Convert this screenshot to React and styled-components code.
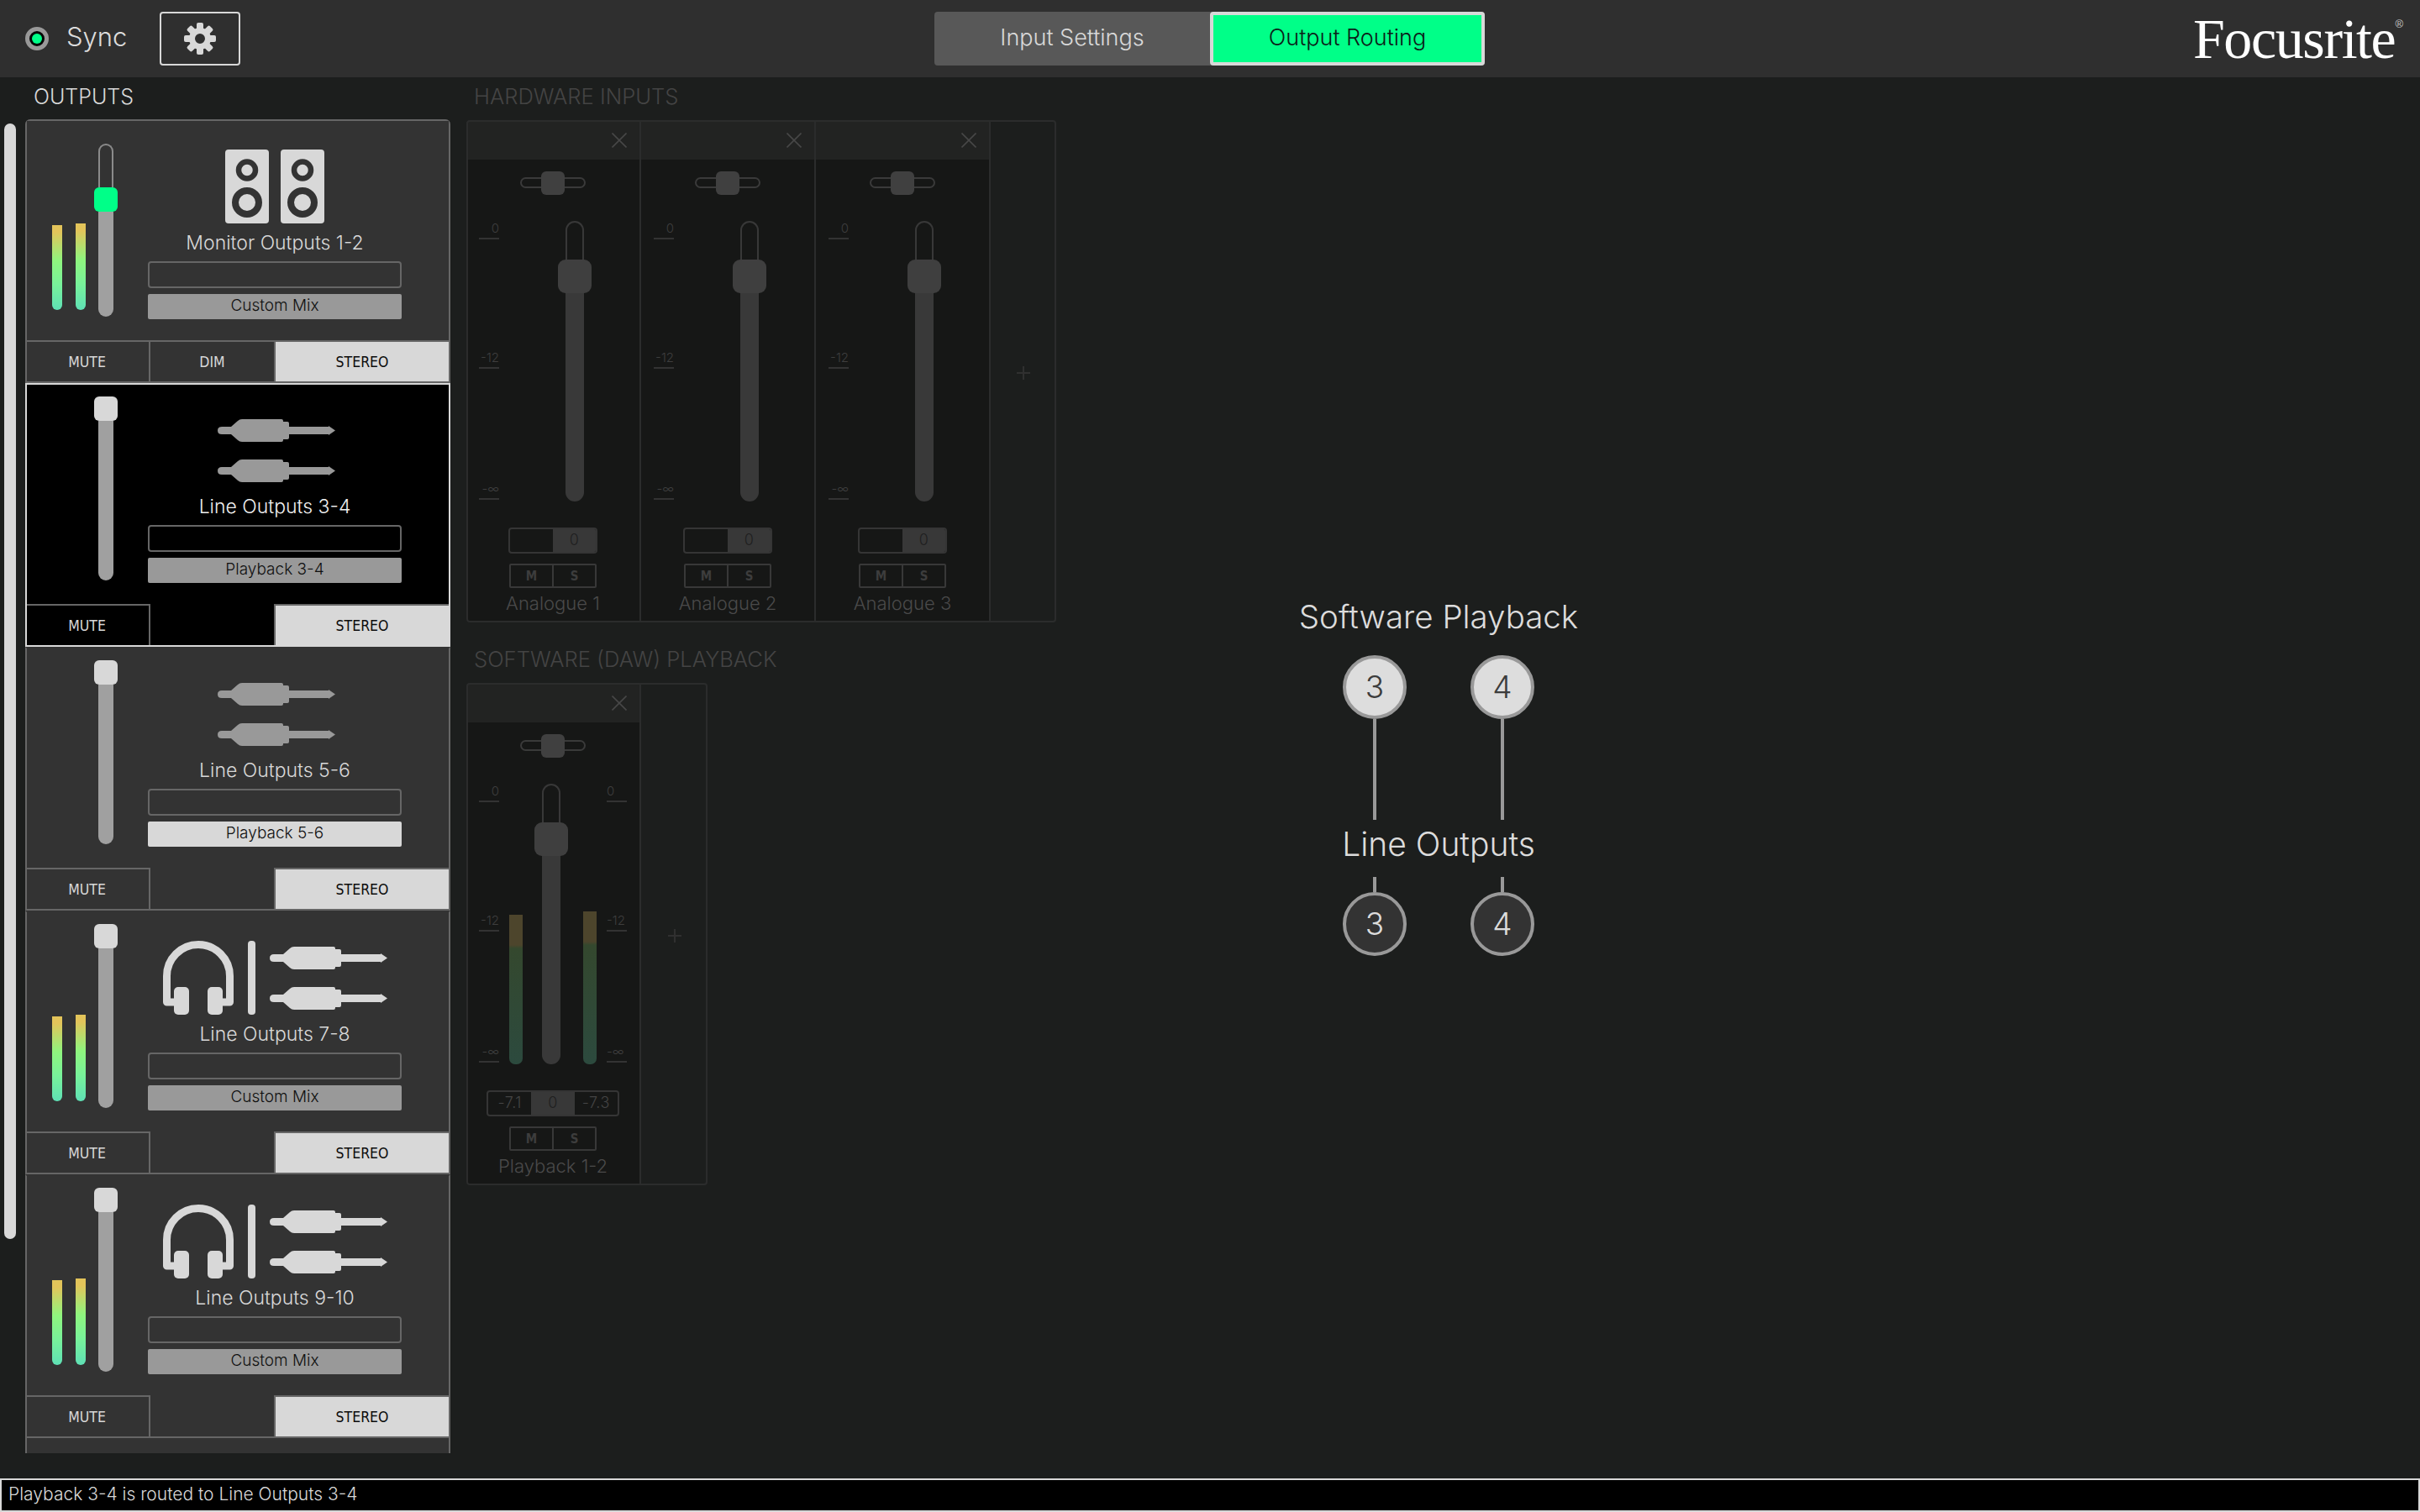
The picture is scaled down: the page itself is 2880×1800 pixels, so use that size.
import React from "react";
import styled, { createGlobalStyle } from "styled-components";

const Global = createGlobalStyle`
  html, body { margin: 0; padding: 0; background: #1c1e1d; }
  * { box-sizing: border-box; }
`;

const Page = styled.div`
  width: 100%; height: 1800px; display: flex; flex-direction: column; overflow: hidden;
  background: #1c1e1d; color: #d8d8d8;
  font-family: Inter, "Liberation Sans", sans-serif; font-weight: 300;
`;
const Header = styled.header`
  height: 92px; flex: none; display: flex; align-items: center; background: #2f2f2f;
`;
const SyncGroup = styled.div`
  width: 1112px; flex: none; display: flex; align-items: center; padding-left: 30px;
`;
const Led = styled.div`
  width: 28px; height: 28px; border-radius: 50%; border: 5px solid #999; background: #050505;
  display: flex; align-items: center; justify-content: center;
  &::after { content: ""; width: 12px; height: 12px; border-radius: 50%; background: #00ff88; }
`;
const SyncLabel = styled.span`
  margin-left: 21px; font-size: 31px; line-height: 36px; width: 90px; padding-bottom: 4px; color: #dcdcdc;
`;
const GearButton = styled.button`
  margin-left: 21px; width: 96px; height: 64px; padding: 0; background: transparent;
  border: 2px solid #d8d8d8; border-radius: 4px;
  display: flex; align-items: center; justify-content: center;
`;
const Tabs = styled.div`
  display: flex; height: 64px; background: #585858; border-radius: 4px; flex: none;
`;
const Tab = styled.div`
  width: ${(p) => (p.$active ? 327 : 328)}px; height: 64px; display: flex; align-items: center; justify-content: center;
  font-size: 27px; padding-bottom: 3px; border-radius: 4px;
  color: ${(p) => (p.$active ? "#0c2018" : "#d8d8d8")};
  background: ${(p) => (p.$active ? "#00ff88" : "transparent")};
  border: ${(p) => (p.$active ? "4px solid #d8d8d8" : "0")};
`;
const Logo = styled.div`
  margin-left: auto; padding-right: 20px; display: flex; align-items: flex-start; color: #fff;
  font-family: "Liberation Serif", serif; font-weight: 400; font-size: 68px; line-height: 68px; letter-spacing: -1.4px;
  sup { font-family: "Liberation Sans", sans-serif; font-size: 13px; line-height: 13px; letter-spacing: 0; margin: 10px 0 0 0; color: #ccc; }
`;

const Main = styled.main`
  flex: 1; min-height: 0; display: flex; align-items: flex-start;
`;
const ScrollBar = styled.div`
  width: 14px; height: 1328px; margin: 55px 0 0 5px; border-radius: 7px; background: #d8d8d8; flex: none;
`;
const SectionLabel = styled.div`
  height: 30px; line-height: 30px; font-size: ${(p) => p.$size}px; margin-left: ${(p) => p.$indent}px;
  margin-top: ${(p) => p.$top || 0}px;
  color: ${(p) => p.$color || "#d8d8d8"}; white-space: nowrap;
`;
const OutputsColumn = styled.section`
  width: 506px; margin-left: 11px; padding-top: 8px; flex: none;
`;
const OutputsPanel = styled.div`
  height: 1588px; margin-top: 12px; background: #333; border-radius: 6px 6px 0 0;
  overflow: hidden; display: flex; flex-direction: column;
`;
const Strip = styled.article`
  height: 314px; flex: none; display: flex; flex-direction: column;
  background: ${(p) => (p.$selected ? "#000" : "#333")};
  border-left: 2px solid ${(p) => (p.$selected ? "#d8d8d8" : "#666")};
  border-right: 2px solid ${(p) => (p.$selected ? "#d8d8d8" : "#666")};
  border-bottom: 2px solid ${(p) => (p.$selected ? "#d8d8d8" : "#666")};
  border-top: 2px solid ${(p) => (p.$selected ? "#d8d8d8" : "#333")};
  &:first-child { border-top-color: #666; }
`;
const PanelTail = styled.div`
  flex: 1; border-left: 2px solid #666; border-right: 2px solid #666;
`;
const StripBody = styled.div`
  height: 261px; flex: none; display: flex;
`;
const Levels = styled.div`
  width: 40px; height: 225px; margin-left: 30px; display: flex; gap: 16px; align-items: flex-end; flex: none;
`;
const LevelBar = styled.div`
  width: 12px; height: ${(p) => p.$h}px; border-radius: 0 0 6px 6px;
  background: linear-gradient(#e3c45a 0%, #e3c45a 8%, #8ff57e 42%, #78f29a 70%, #5fe0b5 100%);
`;
const Fader = styled.div`
  width: 28px; height: ${(p) => 233 - p.$top}px; margin: ${(p) => p.$top}px 0 0 10px; flex: none;
  display: flex; flex-direction: column; align-items: center;
`;
const FaderHead = styled.div`
  width: 18px; height: ${(p) => p.$h}px; flex: none; border: 2px solid #8a8a8a; border-bottom: 0; border-radius: 9px 9px 0 0;
`;
const FaderKnob = styled.div`
  width: 28px; height: 29px; flex: none; border-radius: 6px; background: ${(p) => (p.$accent ? "#00ff88" : "#d8d8d8")};
`;
const FaderFill = styled.div`
  width: 18px; flex: 1; background: #a0a0a0; border-radius: 0 0 9px 9px;
`;
const StripInfo = styled.div`
  width: 302px; margin-left: 36px; flex: none; display: flex; flex-direction: column;
`;
const IconSlot = styled.div`
  height: 88px; margin-top: 34px; flex: none; display: flex; align-items: center; justify-content: center; gap: 17px;
  padding-left: ${(p) => p.$shift || 0}px;
`;
const OutputName = styled.div`
  height: 45px; flex: none; display: flex; align-items: center; justify-content: center; padding-top: 1px;
  font-size: 23px; color: ${(p) => (p.$selected ? "#eee" : "#d8d8d8")}; white-space: nowrap;
`;
const NameField = styled.div`
  height: 32px; flex: none; border: 2px solid #666; border-radius: 4px;
`;
const SourceBar = styled.div`
  height: 30px; margin-top: 7px; flex: none; border-radius: 2px; display: flex; align-items: center; justify-content: center;
  padding-bottom: 4px; font-size: 19px; color: #101010; font-weight: 300;
  background: ${(p) => (p.$light ? "#d8d8d8" : "#999")};
`;
const ButtonRow = styled.div`
  flex: 1; display: flex; min-height: 0;
`;
const StripButton = styled.div`
  width: ${(p) => (p.$w ? `${p.$w}px` : "auto")}; flex: ${(p) => (p.$w ? "none" : "1")};
  display: flex; align-items: center; justify-content: center;
  font-family: "DejaVu Sans Condensed", "DejaVu Sans", sans-serif; font-weight: 400; font-size: 17.5px;
  font-stretch: condensed;
  padding-right: ${(p) => (p.$divider ? 2 : 0)}px;
  border-top: ${(p) => (p.$blank ? "0" : "2px solid #666")};
  border-right: ${(p) => (p.$divider ? "2px solid #666" : "0")};
  border-left: ${(p) => (p.$on ? "2px solid #666" : "0")};
  background: ${(p) => (p.$on ? "#d8d8d8" : "transparent")};
  color: ${(p) => (p.$on ? "#0c0c0c" : "#d8d8d8")};
`;

const RoutingColumn = styled.section`
  width: 702px; margin-left: 19px; padding-top: 8px; flex: none; display: flex; flex-direction: column;
`;
const ChannelPanel = styled.div`
  display: flex; height: 598px; margin-top: 13px; width: ${(p) => p.$w}px; border-radius: 4px;
  outline: 2px solid #2b2c2c; outline-offset: -2px; overflow: hidden;
`;
const Channel = styled.div`
  width: 208px; flex: none; display: flex; flex-direction: column; background: #161716; border-right: 2px solid #2b2c2c;
`;
const ChannelHeader = styled.div`
  height: 47px; flex: none; background: #222322; display: flex; align-items: center; justify-content: flex-end; padding-right: 15px;
`;
const PanTrack = styled.div`
  width: 78px; height: 13px; margin: 21px auto 0; position: relative; flex: none;
  border: 2px solid #3a3a3a; border-radius: 7px;
`;
const PanKnob = styled.div`
  position: absolute; top: -9.5px; left: 23px; width: 28px; height: 28px; border-radius: 6px; background: #404040;
`;
const ChannelMeters = styled.div`
  height: 334px; margin-top: 39px; padding-left: 15px; display: flex; flex: none; align-items: stretch;
`;
const Scale = styled.div`
  width: 24px; flex: none; margin-left: ${(p) => p.$gap || 0}px;
`;
const Tick = styled.div`
  height: 22px; border-bottom: 2px solid #333; font-size: 15px; line-height: 18px; color: #3e3e3e;
  text-align: ${(p) => (p.$right ? "left" : "right")};
  &:nth-child(2) { margin-top: 132px; }
  &:nth-child(3) { margin-top: 134px; }
`;
const ChannelFader = styled.div`
  width: 40px; flex: none; margin-left: ${(p) => p.$gap}px; display: flex; flex-direction: column; align-items: center;
`;
const ChannelFaderHead = styled.div`
  width: 22px; height: 46px; flex: none; border: 2px solid #383838; border-bottom: 0; border-radius: 11px 11px 0 0;
`;
const ChannelFaderKnob = styled.div`
  width: 40px; height: 40px; flex: none; background: #3f3f3f; border-radius: 9px;
`;
const ChannelFaderFill = styled.div`
  width: 22px; flex: 1; background: #393939; border-radius: 0 0 11px 11px;
`;
const DimMeter = styled.div`
  width: 16px; height: ${(p) => p.$h}px; align-self: flex-end; flex: none; margin-left: ${(p) => p.$gap}px; border-radius: 0 0 7px 7px;
  background: linear-gradient(#4d452c 0, #4d452c 36px, #34482e 40px, #2c4a3e 100%);
`;
const ValueBox = styled.div`
  width: ${(p) => p.$w}px; height: 31px; margin: 31px auto 0; flex: none; display: flex;
  border: 2px solid #353535; border-radius: 4px; font-size: 18px; overflow: hidden;
`;
const ValueCell = styled.div`
  flex: 1; display: flex; align-items: center; justify-content: center; padding-bottom: 3px; letter-spacing: 0.5px;
  background: ${(p) => (p.$fill ? "#383838" : "transparent")};
  color: ${(p) => (p.$fill ? "#1f1f1f" : "#444")};
`;
const MuteSolo = styled.div`
  width: 104px; height: 29px; margin: 12px auto 0; flex: none; display: flex; border: 2px solid #383838; border-radius: 2px;
`;
const MuteSoloCell = styled.div`
  flex: 1; display: flex; align-items: center; justify-content: center;
  font-family: "DejaVu Sans Condensed", "DejaVu Sans", sans-serif; font-weight: 700; font-size: 15px; font-stretch: condensed; color: #3d3d3d;
  & + & { border-left: 2px solid #383838; }
`;
const ChannelName = styled.div`
  height: 28px; margin-top: 4px; flex: none; text-align: center; line-height: 28px; font-size: 22px; color: #4a4a4a; white-space: nowrap;
`;
const AddColumn = styled.div`
  flex: 1; display: flex; align-items: center; justify-content: center; padding-top: 4px;
`;

const Diagram = styled.section`
  width: 400px; margin: -4px 0 0 255px; align-self: center; flex: none; display: flex; flex-direction: column; align-items: center;
`;
const DiagramTitle = styled.div`
  font-size: ${(p) => p.$size}px; line-height: 48px; color: #dcdcdc; white-space: nowrap; height: 48px;
  margin-top: ${(p) => p.$top || 0}px;
`;
const PortRow = styled.div`
  display: flex; gap: 76px; margin-top: ${(p) => p.$top}px;
`;
const Port = styled.div`
  width: 76px; display: flex; flex-direction: column; align-items: center;
`;
const PortCircle = styled.div`
  width: 76px; height: 76px; border-radius: 50%; border: 4px solid #999; flex: none;
  display: flex; align-items: center; justify-content: center; padding-bottom: 2px; font-size: 37px;
  background: ${(p) => (p.$source ? "#dddddd" : "#333")};
  color: ${(p) => (p.$source ? "#3c3c3c" : "#dcdcdc")};
`;
const Wire = styled.div`
  width: 4px; height: ${(p) => p.$h}px; background: #999; flex: none;
`;

const StatusBar = styled.footer`
  height: 40px; flex: none; background: #000; border: 2px solid #d8d8d8; padding: 0 0 3px 8px;
  display: flex; align-items: center; font-size: 21px; color: #d8d8d8; white-space: nowrap;
`;

const Gear = () => (
  <svg width="40" height="40" viewBox="-20 -20 40 40" aria-hidden="true">
    <circle r="9.5" fill="none" stroke="#d8d8d8" strokeWidth="7" />
    {[0, 45, 90, 135, 180, 225, 270, 315].map((a) => (
      <rect key={a} x="-4" y="-19" width="8" height="9" rx="2" fill="#d8d8d8" transform={`rotate(${a})`} />
    ))}
  </svg>
);

const Speakers = () => (
  <svg width="118" height="88" viewBox="0 0 118 88" aria-hidden="true">
    {[0, 66].map((x) => (
      <g key={x} transform={`translate(${x} 0)`}>
        <rect width="52" height="88" rx="4" fill="#d8d8d8" />
        <circle cx="26" cy="24.5" r="10" fill="#d8d8d8" stroke="#333" strokeWidth="6.5" />
        <circle cx="26" cy="63" r="14" fill="#d8d8d8" stroke="#333" strokeWidth="8" />
      </g>
    ))}
  </svg>
);

const jackPath =
  "M5 9H16L24 2Q26 0 29 0H76Q78 0 78 2V3H83Q85 3 85 5V9H132V8L140 13.5L132 19V18H85V22Q85 24 83 24H78V25Q78 27 76 27H29Q26 27 24 25L16 18H5Q0 18 0 13.5Q0 9 5 9Z";

const Jacks = ({ color }) => (
  <svg width="140" height="75" viewBox="0 0 140 75" aria-hidden="true">
    <path d={jackPath} fill={color} />
    <path d={jackPath} fill={color} transform="translate(0 48)" />
  </svg>
);

const Headphones = () => (
  <svg width="84" height="88" viewBox="0 0 84 88" aria-hidden="true">
    <path d="M15 73H4.5V42A37.5 37.5 0 0 1 79.5 42V73H68" fill="none" stroke="#d8d8d8" strokeWidth="9" strokeLinejoin="round" />
    <rect x="13" y="55" width="18" height="33" rx="5" fill="#d8d8d8" />
    <rect x="53" y="55" width="18" height="33" rx="5" fill="#d8d8d8" />
  </svg>
);

const Divider = styled.div`
  width: 9px; height: 88px; background: #d8d8d8; border-radius: 4px; flex: none;
`;

const Close = () => (
  <svg width="18" height="18" viewBox="0 0 18 18" aria-hidden="true">
    <path d="M0.5 0.5 17.5 17.5M17.5 0.5 0.5 17.5" stroke="#474747" strokeWidth="1.6" />
  </svg>
);
const Plus = () => (
  <svg width="16" height="16" viewBox="0 0 16 16" aria-hidden="true">
    <path d="M8 0V16M0 8H16" stroke="#303030" strokeWidth="2" />
  </svg>
);

const strips = [
  { name: "Monitor Outputs 1-2", source: "Custom Mix", icon: "speakers", levels: [101, 103], top: 27, head: 52, accent: true, dim: true },
  { name: "Line Outputs 3-4", source: "Playback 3-4", icon: "jacks", selected: true },
  { name: "Line Outputs 5-6", source: "Playback 5-6", icon: "jacks", light: true },
  { name: "Line Outputs 7-8", source: "Custom Mix", icon: "phones", levels: [101, 103] },
  { name: "Line Outputs 9-10", source: "Custom Mix", icon: "phones", levels: [101, 103] },
];

const StripIcon = ({ icon }) => {
  if (icon === "speakers") return <Speakers />;
  if (icon === "jacks") return <Jacks color="#999" />;
  return (
    <>
      <Headphones />
      <Divider />
      <Jacks color="#d8d8d8" />
    </>
  );
};

const OutputStrip = ({ s }) => (
  <Strip $selected={s.selected}>
    <StripBody>
      <Levels>
        {(s.levels || []).map((h, i) => (
          <LevelBar key={i} $h={h} />
        ))}
      </Levels>
      <Fader $top={s.top || 14}>
        {s.head ? <FaderHead $h={s.head} /> : null}
        <FaderKnob $accent={s.accent} />
        <FaderFill />
      </Fader>
      <StripInfo>
        <IconSlot $shift={s.icon === "jacks" ? 4 : 0}>
          <StripIcon icon={s.icon} />
        </IconSlot>
        <OutputName $selected={s.selected}>{s.name}</OutputName>
        <NameField />
        <SourceBar $light={s.light}>{s.source}</SourceBar>
      </StripInfo>
    </StripBody>
    <ButtonRow>
      <StripButton $w={147} $divider>MUTE</StripButton>
      <StripButton $w={147} $blank={!s.dim}>{s.dim ? "DIM" : ""}</StripButton>
      <StripButton $on>STEREO</StripButton>
    </ButtonRow>
  </Strip>
);

const ticks = ["0", "-12", "-∞"];

const ChannelStrip = ({ name, meters, values }) => (
  <Channel>
    <ChannelHeader>
      <Close />
    </ChannelHeader>
    <PanTrack>
      <PanKnob />
    </PanTrack>
    <ChannelMeters>
      <Scale>
        {ticks.map((t) => (
          <Tick key={t}>{t}</Tick>
        ))}
      </Scale>
      {meters ? <DimMeter $gap={12} $h={178} /> : null}
      <ChannelFader $gap={meters ? 14 : 70}>
        <ChannelFaderHead />
        <ChannelFaderKnob />
        <ChannelFaderFill />
      </ChannelFader>
      {meters ? <DimMeter $gap={18} $h={182} /> : null}
      {meters ? (
        <Scale $gap={12}>
          {ticks.map((t) => (
            <Tick key={t} $right>{t}</Tick>
          ))}
        </Scale>
      ) : null}
    </ChannelMeters>
    <ValueBox $w={meters ? 158 : 106}>
      {values.map((v, i) => (
        <ValueCell key={i} $fill={v === "0"}>{v}</ValueCell>
      ))}
    </ValueBox>
    <MuteSolo>
      <MuteSoloCell>M</MuteSoloCell>
      <MuteSoloCell>S</MuteSoloCell>
    </MuteSolo>
    <ChannelName>{name}</ChannelName>
  </Channel>
);

export default function App() {
  return (
    <Page>
      <Global />
      <Header>
        <SyncGroup>
          <Led />
          <SyncLabel>Sync</SyncLabel>
          <GearButton>
            <Gear />
          </GearButton>
        </SyncGroup>
        <Tabs>
          <Tab>Input Settings</Tab>
          <Tab $active>Output Routing</Tab>
        </Tabs>
        <Logo>
          Focusrite<sup>®</sup>
        </Logo>
      </Header>
      <Main>
        <ScrollBar />
        <OutputsColumn>
          <SectionLabel $indent={10} $size={25}>OUTPUTS</SectionLabel>
          <OutputsPanel>
            {strips.map((s) => (
              <OutputStrip key={s.name} s={s} />
            ))}
            <PanelTail />
          </OutputsPanel>
        </OutputsColumn>
        <RoutingColumn>
          <SectionLabel $indent={9} $size={25.6} $color="#444">HARDWARE INPUTS</SectionLabel>
          <ChannelPanel $w={702}>
            <ChannelStrip name="Analogue 1" values={["", "0"]} />
            <ChannelStrip name="Analogue 2" values={["", "0"]} />
            <ChannelStrip name="Analogue 3" values={["", "0"]} />
            <AddColumn>
              <Plus />
            </AddColumn>
          </ChannelPanel>
          <SectionLabel $indent={9} $size={25.6} $top={29} $color="#444">SOFTWARE (DAW) PLAYBACK</SectionLabel>
          <ChannelPanel $w={287}>
            <ChannelStrip name="Playback 1-2" meters values={["-7.1", "0", "-7.3"]} />
            <AddColumn>
              <Plus />
            </AddColumn>
          </ChannelPanel>
        </RoutingColumn>
        <Diagram>
          <DiagramTitle $size={38.5}>Software Playback</DiagramTitle>
          <PortRow $top={22}>
            <Port>
              <PortCircle $source>3</PortCircle>
              <Wire $h={120} />
            </Port>
            <Port>
              <PortCircle $source>4</PortCircle>
              <Wire $h={120} />
            </Port>
          </PortRow>
          <DiagramTitle $size={39} $top={5}>Line Outputs</DiagramTitle>
          <PortRow $top={15}>
            <Port>
              <Wire $h={18} />
              <PortCircle>3</PortCircle>
            </Port>
            <Port>
              <Wire $h={18} />
              <PortCircle>4</PortCircle>
            </Port>
          </PortRow>
        </Diagram>
      </Main>
      <StatusBar>Playback 3-4 is routed to Line Outputs 3-4</StatusBar>
    </Page>
  );
}
